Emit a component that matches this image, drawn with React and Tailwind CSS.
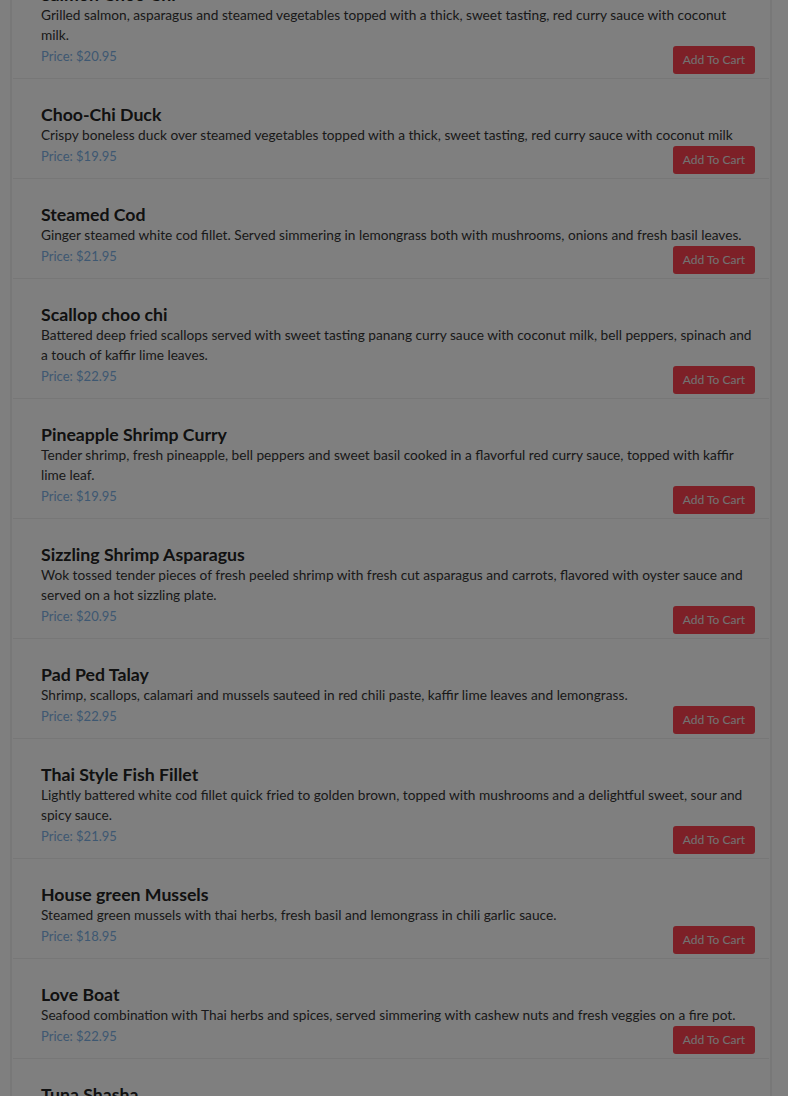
import { useState } from "react";

const items = [
  {
    name: "Salmon Choo Chi",
    desc: "Grilled salmon, asparagus and steamed vegetables topped with a thick, sweet tasting, red curry sauce with coconut milk.",
    price: "20.95",
  },
  {
    name: "Choo-Chi Duck",
    desc: "Crispy boneless duck over steamed vegetables topped with a thick, sweet tasting, red curry sauce with coconut milk",
    price: "19.95",
  },
  {
    name: "Steamed Cod",
    desc: "Ginger steamed white cod fillet. Served simmering in lemongrass both with mushrooms, onions and fresh basil leaves.",
    price: "21.95",
  },
  {
    name: "Scallop choo chi",
    desc: "Battered deep fried scallops served with sweet tasting panang curry sauce with coconut milk, bell peppers, spinach and a touch of kaffir lime leaves.",
    price: "22.95",
  },
  {
    name: "Pineapple Shrimp Curry",
    desc: "Tender shrimp, fresh pineapple, bell peppers and sweet basil cooked in a flavorful red curry sauce, topped with kaffir lime leaf.",
    price: "19.95",
  },
  {
    name: "Sizzling Shrimp Asparagus",
    desc: "Wok tossed tender pieces of fresh peeled shrimp with fresh cut asparagus and carrots, flavored with oyster sauce and served on a hot sizzling plate.",
    price: "20.95",
  },
  {
    name: "Pad Ped Talay",
    desc: "Shrimp, scallops, calamari and mussels sauteed in red chili paste, kaffir lime leaves and lemongrass.",
    price: "22.95",
  },
  {
    name: "Thai Style Fish Fillet",
    desc: "Lightly battered white cod fillet quick fried to golden brown, topped with mushrooms and a delightful sweet, sour and spicy sauce.",
    price: "21.95",
  },
  {
    name: "House green Mussels",
    desc: "Steamed green mussels with thai herbs, fresh basil and lemongrass in chili garlic sauce.",
    price: "18.95",
  },
  {
    name: "Love Boat",
    desc: "Seafood combination with Thai herbs and spices, served simmering with cashew nuts and fresh veggies on a fire pot.",
    price: "22.95",
  },
  {
    name: "Tuna Shasha",
    desc: "Seared tuna steak served with steamed vegetables and a spicy shasha sauce.",
    price: "23.95",
  },
];

const MenuItem = ({ item, onAdd }) => {
  return (
    <div className="flex flex-col border-b border-[#eeeeee] mx-px pl-[28px] pr-[14px] pt-[25px] pb-[4px]">
      <h4 className="text-[17.7px] leading-[21px] font-bold text-[#222222]">
        {item.name}
      </h4>
      <p className="text-[13.7px] leading-[20px] text-[#333333]">{item.desc}</p>
      <div className="flex items-start justify-between mt-px">
        <p className="text-[13px] leading-[20px] text-[#7cb0e4]">
          {"Price: $" + item.price}
        </p>
        <button
          onClick={() => onAdd(item)}
          className="h-[28px] w-[82px] rounded-[3px] bg-[#fa404e] text-[#e4e4e4] text-[12px]"
        >
          Add To Cart
        </button>
      </div>
    </div>
  );
};

const App = () => {
  const [cart, setCart] = useState([]);

  const handleAdd = (item) => {
    setCart([...cart, item]);
  };

  return (
    <div
      className="relative h-[1096px] overflow-hidden bg-white"
      style={{ fontFamily: "Lato, 'Noto Sans', sans-serif" }}
    >
      <div className="ml-[10px] mr-[16px] mt-[-41px] border-x-2 border-[#f0f0f0] bg-white">
        {items.map((item) => (
          <MenuItem key={item.name} item={item} onAdd={handleAdd} />
        ))}
      </div>
      {/* modal backdrop */}
      <div className="fixed inset-0 bg-black/50" />
    </div>
  );
};

export default App;
